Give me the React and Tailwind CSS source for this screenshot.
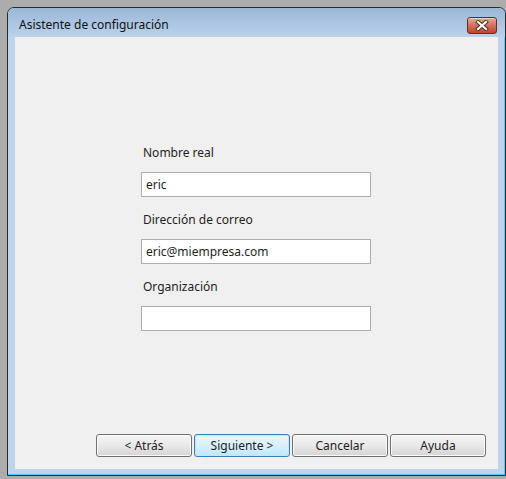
import React from "react";

const font = { fontFamily: '"Noto Sans", "Open Sans", sans-serif' };

function CloseButton() {
  return (
    <div className="flex h-[17px] w-[30px] items-center justify-center rounded-[3px] border border-[#6e2a21] bg-gradient-to-b from-[#e8a899] via-[#d0715f] to-[#c4402c] shadow-[inset_0_1px_0_rgba(255,255,255,0.45)]">
      <svg width="14" height="11" viewBox="0 0 14 11">
        <path d="M3 2 L11 9 M11 2 L3 9" stroke="#4a2a28" strokeWidth="4" strokeLinecap="square" />
        <path d="M3 2 L11 9 M11 2 L3 9" stroke="#ffffff" strokeWidth="2.2" strokeLinecap="square" />
      </svg>
    </div>
  );
}

function Field({ label, value, first }) {
  return (
    <div className={first ? "" : "mt-[15px]"}>
      <div className="h-[16px] pl-[2px] text-[12px] leading-[16px] text-[#1e1e1e]">{label}</div>
      <input
        readOnly
        value={value}
        className="mt-[11px] block h-[25px] w-[230px] border border-[#abadb3] bg-white px-[4px] text-[12px] text-[#1e1e1e] outline-none"
        style={font}
      />
    </div>
  );
}

function WinButton({ children, focused }) {
  return (
    <button
      className={
        "h-[23px] w-[96px] rounded-[3px] border text-[12px] text-[#1e1e1e] " +
        (focused
          ? "border-[#3c7fb1] bg-gradient-to-b from-[#eaf6fd] via-[#d9f0fc] to-[#bee6fd] shadow-[inset_0_0_0_1px_#c6e6f8]"
          : "border-[#707070] bg-gradient-to-b from-[#f4f4f4] via-[#e9e9e9] to-[#d4d4d4] shadow-[inset_0_0_0_1px_#fbfbfb]")
      }
      style={font}
    >
      {children}
    </button>
  );
}

export default function App() {
  return (
    <div className="h-[479px] w-[506px] overflow-hidden bg-[#acacac] pl-[7px] pt-[7px]" style={font}>
      <div className="flex h-[469px] w-[499px] flex-col rounded-t-[7px] border border-[#2a2a2a] bg-[#bcd4ec] shadow-[inset_-1px_-1px_0_#52cdef]">
        {/* Title bar */}
        <div className="flex h-[29px] shrink-0 items-start justify-between rounded-t-[6px] bg-gradient-to-b from-[#9bb7d7] to-[#bad2eb] pl-[11px] pr-[8px]">
          <span className="pt-[9px] text-[12px] leading-[16px] text-[#111]">Asistente de configuración</span>
          <div className="pt-[9px]">
            <CloseButton />
          </div>
        </div>

        {/* Client area */}
        <div className="mx-[7px] mb-[6px] flex flex-1 flex-col bg-[#f0f0f0]">
          <div className="flex pl-[126px] pt-[108px]">
            <div>
              <Field label="Nombre real" value="eric" first />
              <Field label="Dirección de correo" value="eric@miempresa.com" />
              <Field label="Organización" value="" />
            </div>
          </div>

          <div className="mt-auto flex justify-end gap-[2px] pb-[12px] pr-[12px]">
            <WinButton>&lt; Atrás</WinButton>
            <WinButton focused>Siguiente &gt;</WinButton>
            <WinButton>Cancelar</WinButton>
            <WinButton>Ayuda</WinButton>
          </div>
        </div>
      </div>
    </div>
  );
}
